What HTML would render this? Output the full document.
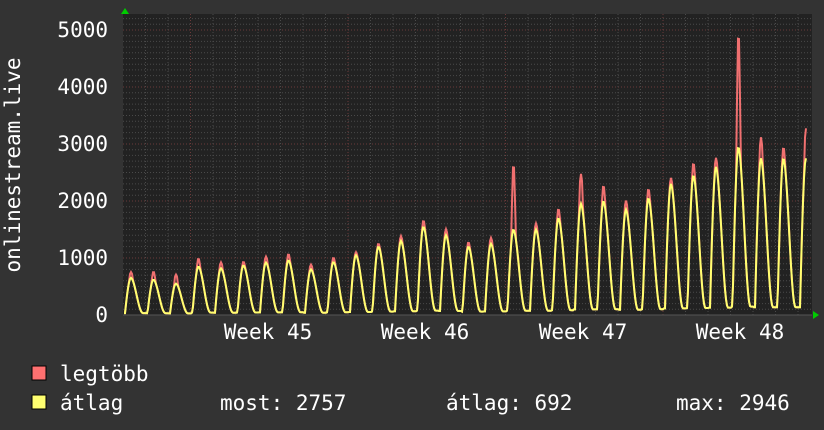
<!DOCTYPE html><html><head><style>
body{margin:0;background:#333;width:824px;height:430px;overflow:hidden;font-family:"DejaVu Sans Mono","Liberation Mono",monospace;color:#fff}
svg{position:absolute;left:0;top:0}
text{font-family:"DejaVu Sans Mono","Liberation Mono",monospace;fill:#fff;font-size:21px}
</style></head><body>
<svg id="s" width="824" height="430" xmlns="http://www.w3.org/2000/svg">
<rect x="123" y="14" width="689" height="301" fill="#222"/>
<g id="grid"></g>
<path id="mx" fill="none" stroke="#f07070" stroke-width="2"/>
<path id="av" fill="none" stroke="#ffff70" stroke-width="2"/>
<line x1="123" y1="315" x2="812" y2="315" stroke="#555" stroke-width="1"/>
<polygon points="125,8 121,14 129,14" fill="#0c0"/>
<polygon points="819,315 813,311 813,319" fill="#0c0"/>
<text x="108" y="37" text-anchor="end">5000</text>
<text x="108" y="94" text-anchor="end">4000</text>
<text x="108" y="151" text-anchor="end">3000</text>
<text x="108" y="208" text-anchor="end">2000</text>
<text x="108" y="265" text-anchor="end">1000</text>
<text x="108" y="322" text-anchor="end">0</text>
<text transform="translate(20,165) rotate(-90)" text-anchor="middle">onlinestream.live</text>
<text x="268" y="339" text-anchor="middle">Week 45</text>
<text x="425" y="339" text-anchor="middle">Week 46</text>
<text x="583" y="339" text-anchor="middle">Week 47</text>
<text x="740" y="339" text-anchor="middle">Week 48</text>
<rect x="32" y="366" width="14" height="14" fill="#ff7070" stroke="#000" stroke-width="1"/>
<rect x="32" y="395" width="14" height="14" fill="#ffff70" stroke="#000" stroke-width="1"/>
<text x="60" y="381">legtöbb</text>
<text x="60" y="410">átlag</text>
<text x="220" y="410">most: 2757</text>
<text x="446" y="410">átlag: 692</text>
<text x="676" y="410">max: 2946</text>
</svg>
<script>
var g=document.getElementById('grid'),h='';
for(var v=0;v<=5250;v+=100){var y=315-v*0.057;if(y<14)break;var maj=v%1000==0&&v>0;
h+='<line x1="123" x2="812" y1="'+y.toFixed(1)+'" y2="'+y.toFixed(1)+'" stroke="'+(maj?'#6a3a3a':'#4a4a4a')+'" stroke-dasharray="1,2"/>';}
for(var x=123+22.5;x<812;x+=22.5){var maj=Math.abs(((x-189)/157.5)-Math.round((x-189)/157.5))<0.01;
h+='<line y1="14" y2="315" x1="'+x.toFixed(1)+'" x2="'+x.toFixed(1)+'" stroke="'+(maj?'#6a3a3a':'#4a4a4a')+'" stroke-dasharray="1,2"/>';}
g.innerHTML=h;
var P=[[750,650],[750,620],[700,550],[980,850],[920,820],[930,870],[1020,920],[1060,960],[880,800],[1000,930],[1100,1050],[1250,1200],[1380,1300],[1650,1550],[1500,1400],[1270,1200],[1350,1250],[2550,1500],[1600,1500],[1850,1700],[2450,1950],[2250,2000],[2000,1850],[2200,2050],[2400,2300],[2650,2450],[2750,2600],[4780,2950],[3100,2750],[2930,2750],[3250,2750]];
function shape(p){
 if(p<1)return 0.05;
 if(p<7)return 0.05+0.95*Math.sin((p-1)/6*Math.PI/2);
 if(p<19){var t=(p-7)/12;return 0.05+0.95*(0.5+0.5*Math.cos(t*Math.PI))*(1-0.15*t);}
 return 0.05;}
function path(k){var d='';for(var x=124;x<=806;x++){var p=x-124,i=Math.floor(p/22.5),ph=p-i*22.5;var pk=P[Math.min(i,P.length-1)];
var s=shape(ph),val;
if(k==0){var base=pk[1]*s;var dd=Math.abs(ph-7);var f=dd<0.8?1:Math.max(0,1-(dd-0.8)/1.5);val=base+(pk[0]-pk[1])*f*1.05;}
else val=pk[1]*s;
var y=315-val*0.057;d+=(x==124?'M':'L')+x+','+y.toFixed(1);}return d;}
document.getElementById('mx').setAttribute('d',path(0));
document.getElementById('av').setAttribute('d',path(1));
</script>
</body></html>
